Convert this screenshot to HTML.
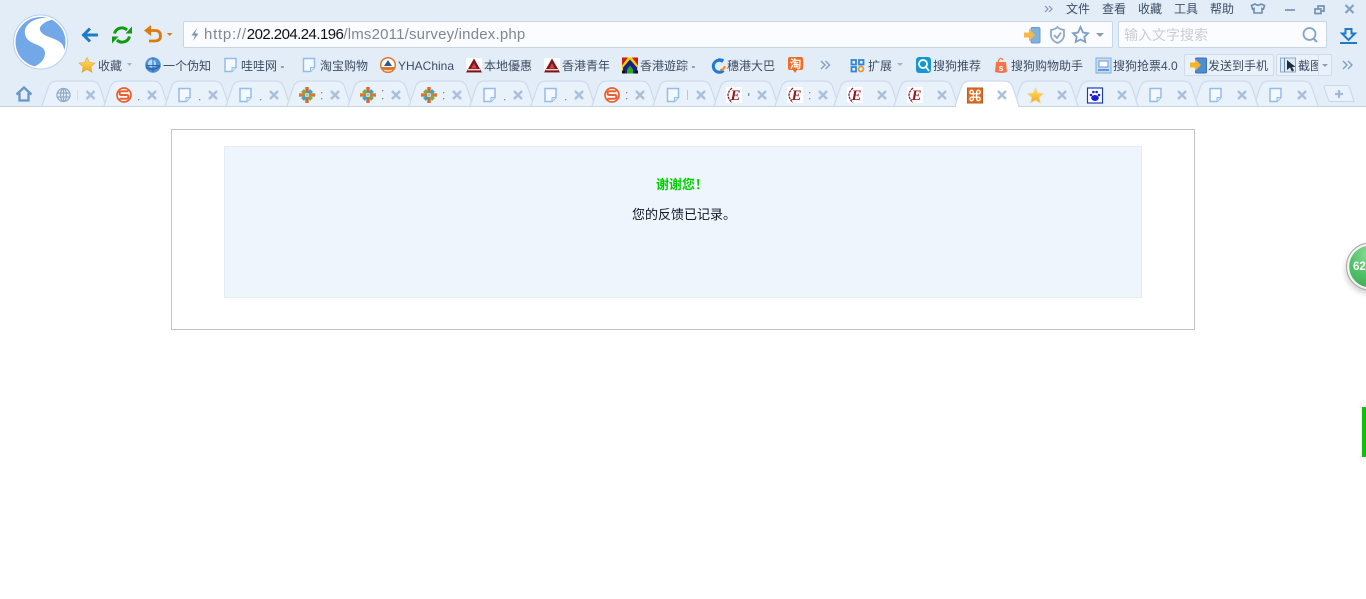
<!DOCTYPE html>
<html lang="zh"><head><meta charset="utf-8"><title>survey</title>
<style>
html,body{margin:0;padding:0;width:1366px;height:599px;overflow:hidden;background:#fff}
body{position:relative;font-family:"Liberation Sans","Noto Sans CJK SC",sans-serif}
#chrome{position:absolute;left:0;top:0;width:1366px;height:107px;background:#e3edf8}
svg{position:absolute;left:0;top:0}
.t{position:absolute;font-size:12px;line-height:16px;color:#3d4d63;white-space:nowrap}
.btn{position:absolute;background:#eaf1fa;border:1px solid #cfdcec;border-radius:2px;box-sizing:border-box}
.bar{position:absolute;background:#fbfcff;border:1px solid #c7d5e8;border-radius:2px;box-sizing:border-box}
#outer{position:absolute;left:171px;top:129px;width:1024px;height:201px;border:1px solid #c4c4c4;box-sizing:border-box}
#inner{position:absolute;left:224px;top:146px;width:918px;height:152px;background:#eef5fd;border:1px solid #e4ecf5;box-sizing:border-box}
.c{position:absolute;white-space:nowrap;font-family:"WenQuanYi Zen Hei","Noto Sans CJK SC",sans-serif}
</style></head><body>
<div id="chrome"></div>
<div class="bar" style="left:183px;top:21px;width:930px;height:27px"></div>
<div class="bar" style="left:1118px;top:21px;width:209px;height:27px"></div>
<div class="btn" style="left:1184px;top:54px;width:90px;height:22px"></div>
<div class="btn" style="left:1276px;top:54px;width:56px;height:22px"></div>

<svg width="1366" height="107" viewBox="0 0 1366 107">
<defs>
<path id="tab" d="M0,106 L6,88 Q8,81 15,81 L49,81 Q56,81 58,88 L64,106"/>
<g id="x"><path d="M-4,-4L4,4M4,-4L-4,4" stroke="#a9c0dc" stroke-width="2.400" fill="none"/></g>
<g id="doc"><path d="M-5.500,-6.500H5.500V2.500L1.500,6.500H-5.500Z" fill="#f4f9ff" stroke="#94bcec" stroke-width="1.500"/><path d="M5.500,2.500H1.500V6.500" fill="#dbe8f7" stroke="#94bcec"/></g>
<g id="sg"><circle r="7" fill="#fff" stroke="#ea5f30" stroke-width="1.700"/><path d="M4.500,-3.700H-2.500Q-4.500,-3.700 -4.500,-1.800Q-4.500,0 -2.500,0H2.500Q4.500,0 4.500,1.800Q4.500,3.700 2.500,3.700H-4.500" fill="none" stroke="#ea5f30" stroke-width="2"/></g>
<g id="dia"><rect x="-8" y="-1.700" width="6" height="3.400" fill="#e0762c"/><rect x="2" y="-1.700" width="6" height="3.400" fill="#e0762c"/><rect x="-1.700" y="-8" width="3.400" height="6" fill="#d9662c"/><rect x="-1.700" y="2" width="3.400" height="6" fill="#d9662c"/><path d="M-6,-3L-3,-6L-0.500,-2.500L-2.500,-0.500Z" fill="#7fa84a"/><path d="M6,-3L3,-6L0.500,-2.500L2.500,-0.500Z" fill="#36a6c8"/><path d="M-6,3L-3,6L-0.500,2.500L-2.500,0.500Z" fill="#36a6c8"/><path d="M6,3L3,6L0.500,2.500L2.500,0.500Z" fill="#7fa84a"/><circle r="1.500" fill="#9ac4b4"/></g>
<g id="e"><rect x="-8" y="-8" width="16" height="16" fill="#fff"/><text x="1.500" y="5" font-family="Liberation Serif,serif" font-style="italic" font-weight="bold" font-size="15" fill="#8c1c22" text-anchor="middle">E</text><path d="M-2,-7Q-10,0 -2,7.500" fill="none" stroke="#8c1c22" stroke-width="1.300" stroke-dasharray="2.500 .8"/></g>
<g id="tri"><rect x="-8" y="-7.500" width="16" height="15" fill="#fff"/><path d="M0,-7L8,7H-8Z" fill="#7e1218"/><path d="M0,-2.500L3,3H-3Z" fill="#c84444"/><rect x="-6" y="3.500" width="12" height="1.400" fill="#e8d4d4"/></g>
<linearGradient id="sf" x1="0" y1="0" x2="0" y2="1"><stop offset="0" stop-color="#fde26a"/><stop offset="1" stop-color="#f3a81e"/></linearGradient>
</defs>

<!-- tabs -->
<g fill="#e9f1fb" stroke="#cddbed" stroke-width="1.200">
<use href="#tab" x="42"/><use href="#tab" x="104"/><use href="#tab" x="165"/><use href="#tab" x="226"/><use href="#tab" x="287"/><use href="#tab" x="348"/><use href="#tab" x="409"/><use href="#tab" x="470"/><use href="#tab" x="531"/><use href="#tab" x="592"/><use href="#tab" x="653"/><use href="#tab" x="714"/><use href="#tab" x="775"/><use href="#tab" x="834"/><use href="#tab" x="894"/>
<use href="#tab" x="1254"/><use href="#tab" x="1194"/><use href="#tab" x="1134"/><use href="#tab" x="1074"/><use href="#tab" x="1014"/>
</g>
<rect x="0" y="106" width="1366" height="1" fill="#c5d4e8"/>
<use href="#tab" x="955" fill="#fff" stroke="#cddbed" stroke-width="1.200"/>
<rect x="956" y="105" width="62" height="2" fill="#fff"/>

<!-- new tab -->
<path d="M1324,87Q1324,85.500 1326,85.500H1347Q1349,85.500 1349.500,87.500L1354,101.500H1331Q1329,101.500 1328.500,100Z" fill="#e9f1fb" stroke="#c8d7ea"/>
<path d="M1339,90V98M1335,94H1343" stroke="#a0b8d4" stroke-width="2.200"/>

<!-- home -->
<path d="M16.500,94.500L24,87.500L31.500,94.500M19.500,93V100.500H28.500V93" fill="none" stroke="#6a96c4" stroke-width="2.300"/>

<!-- closes -->
<use href="#x" x="90.500" y="95"/><use href="#x" x="152" y="95"/><use href="#x" x="213" y="95"/><use href="#x" x="274" y="95"/><use href="#x" x="335" y="95"/><use href="#x" x="396" y="95"/><use href="#x" x="457" y="95"/><use href="#x" x="518" y="95"/><use href="#x" x="579" y="95"/><use href="#x" x="640" y="95"/><use href="#x" x="701" y="95"/><use href="#x" x="762" y="95"/><use href="#x" x="823" y="95"/><use href="#x" x="882" y="95"/><use href="#x" x="942" y="95"/><use href="#x" x="1002" y="95"/><use href="#x" x="1062" y="95"/><use href="#x" x="1122" y="95"/><use href="#x" x="1182" y="95"/><use href="#x" x="1242" y="95"/><use href="#x" x="1302" y="95"/>

<!-- tab icons -->
<g transform="translate(63.500,95)" fill="none" stroke="#8fabcb" stroke-width="1.300"><circle r="6.500"/><ellipse rx="3" ry="6.500"/><path d="M-6.500,-2H6.500M-6.500,2H6.500M0,-6.500V6.500"/></g>
<rect x="77" y="90" width="1" height="10" fill="#d5e0ee"/>
<use href="#sg" x="124" y="95"/><use href="#doc" x="184.500" y="95"/><use href="#doc" x="245.500" y="95"/>
<use href="#dia" x="307" y="95"/><use href="#dia" x="368" y="95"/><use href="#dia" x="429" y="95"/>
<use href="#doc" x="489.500" y="95"/><use href="#doc" x="550.500" y="95"/><use href="#sg" x="612" y="95"/><use href="#doc" x="673" y="95"/>
<use href="#e" x="734" y="95"/><use href="#e" x="795" y="95"/><use href="#e" x="855" y="95"/><use href="#e" x="915" y="95"/>
<use href="#doc" x="1155.500" y="95"/><use href="#doc" x="1215.500" y="95"/><use href="#doc" x="1275.500" y="95"/>
<!-- tab dots -->
<g fill="#7d8da3"><rect x="138" y="99" width="1.300" height="1.300"/><rect x="199" y="99" width="1.300" height="1.300"/><rect x="260" y="99" width="1.300" height="1.300"/><rect x="321" y="92" width="1.300" height="1.300"/><rect x="321" y="98" width="1.300" height="1.300"/><rect x="382" y="90" width="1.300" height="1.300"/><rect x="382" y="98" width="1.300" height="1.300"/><rect x="443" y="92" width="1.300" height="1.300"/><rect x="443" y="98" width="1.300" height="1.300"/><rect x="504" y="99" width="1.300" height="1.300"/><rect x="565" y="99" width="1.300" height="1.300"/><rect x="626" y="92" width="1.300" height="1.300"/><rect x="626" y="98" width="1.300" height="1.300"/><rect x="687" y="90" width="1" height="10" fill="#b8c8da"/><rect x="748" y="93" width="1.300" height="3"/><rect x="809" y="92" width="1.300" height="1.300"/><rect x="809" y="98" width="1.300" height="1.300"/></g>
<!-- xampp -->
<g transform="translate(975,95.500)"><rect x="-7.600" y="-7.600" width="15.200" height="15.200" fill="#de6c20" stroke="#b65a1c" stroke-width=".8"/><g fill="none" stroke="#fff" stroke-width="1.300"><circle cx="-3.400" cy="-3.400" r="1.800"/><circle cx="3.400" cy="-3.400" r="1.800"/><circle cx="-3.400" cy="3.400" r="1.800"/><circle cx="3.400" cy="3.400" r="1.800"/><path d="M-1.600,-3.400V3.400M1.600,-3.400V3.400M-3.400,-1.600H3.400M-3.400,1.600H3.400"/></g></g>
<!-- star tab -->
<path d="M1035.500,88L1037.800,93L1043.300,93.700L1039.200,97.400L1040.400,103L1035.500,100.200L1030.600,103L1031.800,97.400L1027.700,93.700L1033.200,93Z" fill="url(#sf)" stroke="#f2d6a0" stroke-width=".8"/>
<!-- paw -->
<g transform="translate(1095,95.500)"><rect x="-7.500" y="-7.500" width="15" height="15" fill="#fff" stroke="#1a3fb0" stroke-width="1.200"/><g fill="#1a1fd0"><ellipse cx="0" cy="2.500" rx="3.800" ry="3"/><circle cx="-4" cy="-0.500" r="1.300"/><circle cx="4" cy="-0.500" r="1.300"/><circle cx="-1.600" cy="-3.500" r="1.300"/><circle cx="1.600" cy="-3.500" r="1.300"/></g></g>

<!-- logo -->
<circle cx="40.500" cy="42" r="27" fill="#fff" stroke="#b9d0ec"/>
<circle cx="40.500" cy="42" r="25" fill="#73a8e8"/>
<path d="M54,19C40,15 23,22 25,34C27,46 45,43 45,53C45,60 39,65 33,67C48,71 65,62 64,49C63,37 43,39 40,30C39,25 46,21 54,19Z" fill="#fff"/>

<!-- nav -->
<path d="M98,35H84M90,28.500L83.500,35L90,41.500" fill="none" stroke="#1f7cc4" stroke-width="3"/>
<g fill="none" stroke="#139a13" stroke-width="3"><path d="M114.500,33.500A7.500,7.500 0 0 1 127,30"/><path d="M129.500,36.500A7.500,7.500 0 0 1 117,40"/></g>
<path d="M125.500,33.500H132V26.500Z" fill="#139a13"/><path d="M118.500,36.500H112V43.500Z" fill="#139a13"/>
<path d="M151,25L144,30.500L151,36Z" fill="#dc7a0e"/><path d="M149,30.500H155Q160.500,30.500 160.500,36Q160.500,41 154.500,41H149" fill="none" stroke="#dc7a0e" stroke-width="2.800"/>
<path d="M167,33H172.500L169.700,36Z" fill="#dc7a0e"/>
<path d="M197,28L191.500,35.500H195L193,41L198.500,33.500H195Z" fill="#7d93ad"/>

<!-- address icons -->
<rect x="1031" y="27.500" width="9" height="15.500" rx="1.500" fill="#7fb0de" stroke="#6c9bc9"/>
<path d="M1024,32.500H1029V28.500L1035,35L1029,41.500V37.500H1024Z" fill="#f4b74c"/>
<path d="M1051,30Q1056,29 1057.500,27Q1059,29 1064,30V36Q1063,41 1057.500,43Q1052,41 1051,36Z" fill="none" stroke="#8fa9c6" stroke-width="1.800"/><path d="M1054,35L1057,38L1061,32.500" fill="none" stroke="#8fa9c6" stroke-width="1.800"/>
<path d="M1080.500,27L1083,32.500L1088,33.200L1084.300,36.800L1085.300,42L1080.500,39.500L1075.700,42L1076.700,36.800L1073,33.200L1078,32.500Z" fill="none" stroke="#7d9fc5" stroke-width="1.800"/>
<path d="M1096,33H1104L1100,37Z" fill="#8a9db5"/>
<!-- search -->
<circle cx="1309.500" cy="34" r="6" fill="none" stroke="#82a5c9" stroke-width="1.800"/><path d="M1313.500,38.500L1317,42" stroke="#82a5c9" stroke-width="2"/>
<!-- download -->
<path d="M1345.500,29H1351.500V33.500H1355L1348.500,40L1342,33.500H1345.500Z" fill="none" stroke="#1f7cc4" stroke-width="2"/>
<rect x="1340" y="42" width="17" height="2" fill="#1f7cc4"/>

<!-- window controls -->
<path d="M1045,6L1048,9L1045,12M1049,6L1052,9L1049,12" fill="none" stroke="#7d97b5" stroke-width="1.200"/>
<path d="M1255,4L1251.500,5.500L1252.500,9L1254,8.500V13H1262V8.500L1263.500,9L1264.500,5.500L1261,4Q1258,6.500 1255,4Z" fill="none" stroke="#6c8db0" stroke-width="1.600"/>
<rect x="1285" y="9" width="10" height="2" fill="#86a1bf"/>
<path d="M1315,9H1321V13.500H1315ZM1318,9V6H1324V11H1321" fill="none" stroke="#7493b4" stroke-width="1.700"/>
<path d="M1345.500,5L1353.500,13M1353.500,5L1345.500,13" stroke="#86a1bf" stroke-width="2.200"/>

<!-- bookmark icons -->
<path d="M87,57.500L89.400,62.500L95,63.100L90.800,66.800L92,72.300L87,69.500L82,72.300L83.200,66.800L79,63.100L84.600,62.500Z" fill="url(#sf)" stroke="#dca62a" stroke-width=".6"/>
<path d="M127,63H132L129.500,66Z" fill="#a3b2c5"/>
<circle cx="153" cy="65" r="7.800" fill="#4d8fd4"/><circle cx="152" cy="63.500" r="4" fill="#b6d8f5"/><path d="M153,57.500V72.500M146,65.500H160" stroke="#2c66ab" stroke-width="1"/><path d="M146,67Q153,72 160,66" fill="none" stroke="#2c66ab" stroke-width="1.400"/>
<use href="#doc" x="230.500" y="65"/><use href="#doc" x="309" y="65"/>
<circle cx="388" cy="65" r="7.300" fill="#fff" stroke="#e0762c" stroke-width="1.500"/><path d="M388,60L392,66H384Z" fill="#2c5a92"/><path d="M382,67H394V69Q388,72 382,69Z" fill="#e0762c"/>
<use href="#tri" x="474" y="65.500"/><use href="#tri" x="552" y="65.500"/>
<g transform="translate(630,65.500)"><rect x="-8" y="-8" width="16" height="16" fill="#e8d800"/><path d="M-8,-8L-2,-8L-8,0ZM8,-8L2,-8L8,0Z" fill="#d01818"/><path d="M0,-6L7,2V8H-7V2Z" fill="#1c1c8c"/><path d="M0,0L3,4V8H-3V4Z" fill="#20b020"/><rect x="-8" y="5" width="3" height="3" fill="#101010"/><rect x="5" y="5" width="3" height="3" fill="#101010"/></g>
<path d="M723,61.500A6,6 0 1 0 723.500,70.500" fill="none" stroke="#2078d8" stroke-width="3"/><path d="M724,59L718,58L722,63Z" fill="#2078d8"/><path d="M720,70Q724,70 725,66" fill="none" stroke="#e8902c" stroke-width="2"/>
<path d="M790,57H801Q803,57 803,59V68Q803,70 801,70H797L795,73L793,70H790Q788,70 788,68V59Q788,57 790,57Z" fill="#f26a24"/>
<text x="795.500" y="68" font-family="Noto Sans CJK SC,sans-serif" font-size="11.500" font-weight="bold" fill="#fff" text-anchor="middle">淘</text>
<path d="M821,61L825,65L821,69M825.500,61L829.500,65L825.500,69" fill="none" stroke="#7d9fc5" stroke-width="1.400"/>
<!-- ext icon -->
<g fill="none" stroke="#2f86d4" stroke-width="1.800"><rect x="851.500" y="60" width="4.500" height="4.500"/><rect x="859" y="60" width="4.500" height="4.500"/><rect x="851.500" y="67" width="4.500" height="4.500"/></g><circle cx="861" cy="69" r="2.500" fill="none" stroke="#e39b2c" stroke-width="1.800"/>
<path d="M897,63H903L900,66Z" fill="#a3b2c5"/>
<rect x="916" y="57" width="15" height="16" rx="3" fill="#1796cf"/><circle cx="923" cy="64" r="4" fill="none" stroke="#fff" stroke-width="1.800"/><path d="M926,67L929,71" stroke="#fff" stroke-width="1.800"/>
<path d="M996,62H1006L1007,72Q1002,74 995,72Z" fill="#f4744a"/><path d="M998,62Q1000,56 1003,60" fill="none" stroke="#f4744a" stroke-width="1.200"/><text x="1001" y="71" font-size="9" font-weight="bold" fill="#fff" text-anchor="middle" font-family="Liberation Sans,sans-serif">s</text>
<rect x="1096" y="58" width="15" height="15" fill="#c8dcf6" stroke="#7daee0"/><rect x="1099" y="61" width="9" height="6" fill="#fff" stroke="#6598d0"/><rect x="1098" y="69" width="11" height="2" fill="#6598d0"/>
<!-- send -->
<rect x="1195.500" y="58" width="11" height="15" rx="1" fill="#4c8dd4" stroke="#3a70b0"/><path d="M1190,62.500H1195V59L1201,65L1195,71V67.500H1190Z" fill="#f0b52c"/>
<!-- shot -->
<rect x="1280.500" y="58" width="15" height="14" fill="#dfeaf8" stroke="#8fa9c6"/><rect x="1284" y="58" width="1" height="14" fill="#6f8fb0"/><path d="M1287,60V70L1290,67.500L1292,71.500L1294,70.500L1292,67H1295.500Z" fill="#1c2c3c"/>
<rect x="1318" y="55" width="1" height="20" fill="#d4e0ef"/>
<path d="M1322,64H1328L1325,67Z" fill="#8a9db5"/>
<path d="M1343,61L1347,65L1343,69M1348,61L1352,65L1348,69" fill="none" stroke="#7d9fc5" stroke-width="1.400"/>
</svg>

<div class="t" style="left:204px;top:25px;font-size:15px;line-height:20px;color:#7f8791"><span style="letter-spacing:.75px">http://</span><span style="color:#111;letter-spacing:-.55px">202.204.24.196</span><span style="letter-spacing:.19px">/lms2011/survey/index.php</span></div>
<div class="t" style="left:1124px;top:26px;font-size:14px;line-height:18px;color:#c9cdd2">输入文字搜索</div>

<div class="t" style="left:1066px;top:1px">文件</div>
<div class="t" style="left:1102px;top:1px">查看</div>
<div class="t" style="left:1138px;top:1px">收藏</div>
<div class="t" style="left:1174px;top:1px">工具</div>
<div class="t" style="left:1210px;top:1px">帮助</div>

<div class="t" style="left:98px;top:58px">收藏</div>
<div class="t" style="left:163px;top:58px">一个伪知</div>
<div class="t" style="left:241px;top:58px">哇哇网 -</div>
<div class="t" style="left:320px;top:58px">淘宝购物</div>
<div class="t" style="left:398px;top:58px">YHAChina</div>
<div class="t" style="left:484px;top:58px">本地優惠</div>
<div class="t" style="left:562px;top:58px">香港青年</div>
<div class="t" style="left:640px;top:58px">香港遊踪 -</div>
<div class="t" style="left:727px;top:58px">穗港大巴</div>
<div class="t" style="left:868px;top:58px">扩展</div>
<div class="t" style="left:933px;top:58px">搜狗推荐</div>
<div class="t" style="left:1011px;top:58px">搜狗购物助手</div>
<div class="t" style="left:1113px;top:58px">搜狗抢票4.0</div>
<div class="t" style="left:1208px;top:58px">发送到手机</div>
<div class="t" style="left:1298px;top:58px;width:20px;overflow:hidden">截图</div>

<div id="outer"></div>
<div id="inner"></div>
<div class="c" style="top:176px;left:656px;font-size:13px;line-height:16px;font-weight:bold;color:#00d000">谢谢您！</div>
<div class="c" style="top:206px;left:632px;font-size:13px;line-height:16px;color:#111827">您的反馈已记录。</div>

<svg width="1366" height="599" viewBox="0 0 1366 599" style="pointer-events:none">
<defs><radialGradient id="g" cx=".5" cy=".2" r=".9"><stop offset="0" stop-color="#8fdd97"/><stop offset=".5" stop-color="#55c46a"/><stop offset="1" stop-color="#3faa55"/></radialGradient>
<filter id="b" x="-30%" y="-30%" width="160%" height="160%"><feGaussianBlur stdDeviation="2.500"/></filter></defs>
<circle cx="1369" cy="270" r="24" fill="#999" opacity=".4" filter="url(#b)"/>
<circle cx="1370" cy="266.500" r="23.500" fill="#f2f2f2" stroke="#a8a8a8"/>
<circle cx="1370" cy="266.500" r="20.800" fill="url(#g)"/>
<text x="1353" y="270" font-family="Liberation Sans,sans-serif" font-size="11.500" font-weight="bold" fill="#fff">62</text>
<rect x="1362" y="407" width="4" height="50" fill="#10c010"/>
</svg>
</body></html>
